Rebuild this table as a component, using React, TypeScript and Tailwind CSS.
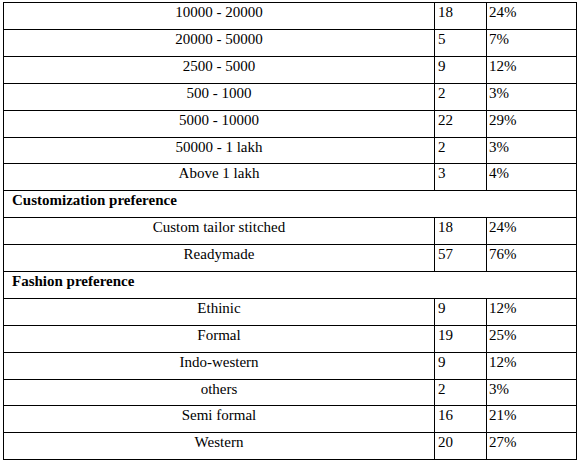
const rows: (
  | { kind: "head"; label: string }
  | { kind: "row"; label: string; n: string; pct: string; short?: boolean }
)[] = [
  { kind: "row", label: "10000 - 20000", n: "18", pct: "24%" },
  { kind: "row", label: "20000 - 50000", n: "5", pct: "7%" },
  { kind: "row", label: "2500 - 5000", n: "9", pct: "12%" },
  { kind: "row", label: "500 - 1000", n: "2", pct: "3%" },
  { kind: "row", label: "5000 - 10000", n: "22", pct: "29%" },
  { kind: "row", label: "50000 - 1 lakh", n: "2", pct: "3%", short: true },
  { kind: "row", label: "Above 1 lakh", n: "3", pct: "4%" },
  { kind: "head", label: "Customization preference" },
  { kind: "row", label: "Custom tailor stitched", n: "18", pct: "24%" },
  { kind: "row", label: "Readymade", n: "57", pct: "76%" },
  { kind: "head", label: "Fashion preference" },
  { kind: "row", label: "Ethinic", n: "9", pct: "12%" },
  { kind: "row", label: "Formal", n: "19", pct: "25%" },
  { kind: "row", label: "Indo-western", n: "9", pct: "12%" },
  { kind: "row", label: "others", n: "2", pct: "3%", short: true },
  { kind: "row", label: "Semi formal", n: "16", pct: "21%" },
  { kind: "row", label: "Western", n: "20", pct: "27%" },
];

export default function App() {
  return (
    <div className="w-[578px] h-[465px] bg-white overflow-hidden pt-[2px] pl-[3px] font-['Liberation_Serif','Times_New_Roman',serif]">
      <table className="w-[573px] table-fixed border-collapse text-[15px] leading-[17px] text-black">
        <colgroup>
          <col className="w-[431px]" />
          <col className="w-[52px]" />
          <col className="w-[90px]" />
        </colgroup>
        <tbody>
          {rows.map((r, i) =>
            r.kind === "head" ? (
              <tr key={i} className="h-[27px]">
                <td colSpan={3} className="border border-black align-top pt-[1px] pl-[8px] font-bold">
                  {r.label}
                </td>
              </tr>
            ) : (
              <tr key={i} className={r.short ? "h-[26px]" : "h-[27px]"}>
                <td className="border border-black align-top pt-[1px] text-center">{r.label}</td>
                <td className="border border-black align-top pt-[1px] pl-[3px]">{r.n}</td>
                <td className="border border-black align-top pt-[1px] pl-[2px]">{r.pct}</td>
              </tr>
            )
          )}
        </tbody>
      </table>
    </div>
  );
}
